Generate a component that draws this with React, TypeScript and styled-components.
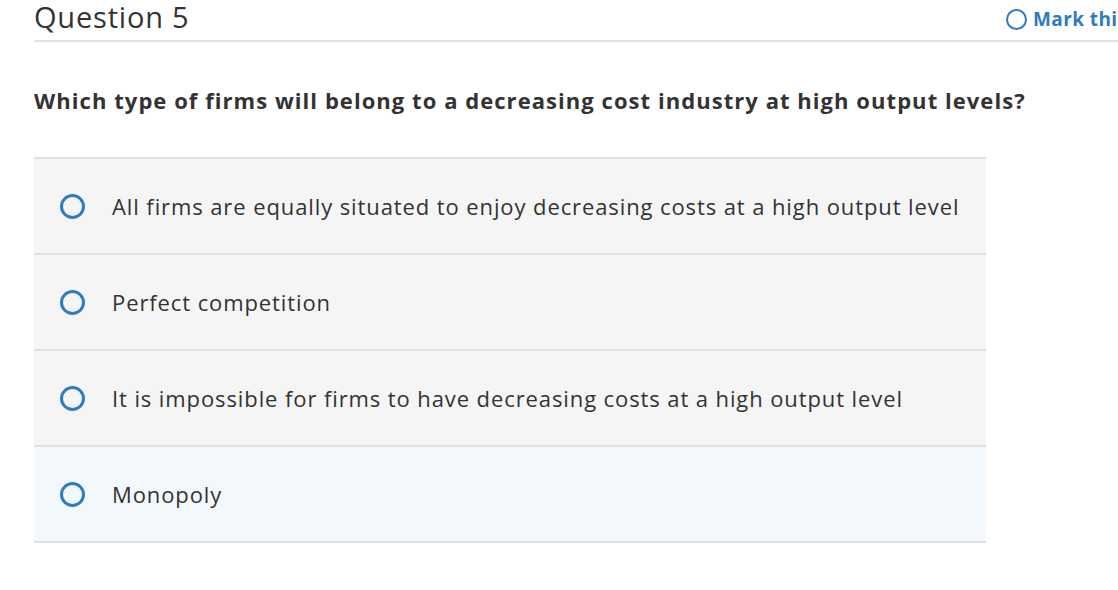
import React from 'react';
import styled, { createGlobalStyle } from 'styled-components';

const GlobalStyle = createGlobalStyle`
  html, body {
    margin: 0;
    padding: 0;
    background: #ffffff;
    overflow: hidden;
  }
  body {
    font-family: 'Open Sans', 'Liberation Sans', Arial, sans-serif;
    color: #333333;
  }
`;

const options = [
  'All firms are equally situated to enjoy decreasing costs at a high output level',
  'Perfect competition',
  'It is impossible for firms to have decreasing costs at a high output level',
  'Monopoly',
];

export default function App(): JSX.Element {
  return (
    <>
      <GlobalStyle />
      <Page>
        <Header>
          <Title>Question 5</Title>
          <MarkButton>
            <MarkCircle />
            <MarkLabel>Mark this question</MarkLabel>
          </MarkButton>
        </Header>
        <Prompt>Which type of firms will belong to a decreasing cost industry at high output levels?</Prompt>
        <OptionList>
          {options.map((text, i) => (
            <OptionRow key={text} hovered={i === options.length - 1}>
              <Radio />
              <OptionText>{text}</OptionText>
            </OptionRow>
          ))}
        </OptionList>
      </Page>
    </>
  );
}

const Page = styled.div`
  padding-left: 34px;
  width: 1084px;
  white-space: nowrap;
`;

const Header = styled.div`
  display: flex;
  align-items: flex-start;
  height: 40px;
  border-bottom: 2px solid #e0e0e3;
`;

const Title = styled.h2`
  margin: 0;
  font-size: 29px;
  line-height: 34px;
  font-weight: 400;
  letter-spacing: 0.8px;
  color: #333333;
`;

const MarkButton = styled.div`
  flex: none;
  display: flex;
  align-items: center;
  gap: 6px;
  margin-left: auto;
  margin-top: 7px;
  width: 112px;
  height: 24px;
  overflow: hidden;
  font-size: 19px;
  font-weight: 700;
  color: #2f7bbf;
`;

const MarkCircle = styled.span`
  flex: none;
  width: 17px;
  height: 17px;
  border: 2px solid #2f7bbf;
  border-radius: 50%;
`;

const MarkLabel = styled.span`
  letter-spacing: 0.4px;
`;

const Prompt = styled.p`
  margin: 43px 0 0;
  font-size: 22px;
  line-height: 30px;
  font-weight: 700;
  letter-spacing: 1.05px;
  color: #333333;
`;

const OptionList = styled.div`
  margin-top: 42px;
  width: 952px;
  border-top: 2px solid #e0e0e3;
`;

const OptionRow = styled.div<{ hovered?: boolean }>`
  display: flex;
  align-items: center;
  gap: 27px;
  box-sizing: border-box;
  height: 96px;
  padding-left: 26px;
  background: ${(p) => (p.hovered ? '#f3f8fc' : '#f5f5f5')};
  border-bottom: 2px solid #e0e0e3;
`;

const Radio = styled.span`
  flex: none;
  width: 19px;
  height: 19px;
  border: 3px solid #2f7bbf;
  border-radius: 50%;
`;

const OptionText = styled.span`
  font-size: 22px;
  letter-spacing: 0.9px;
  color: #333333;
`;
